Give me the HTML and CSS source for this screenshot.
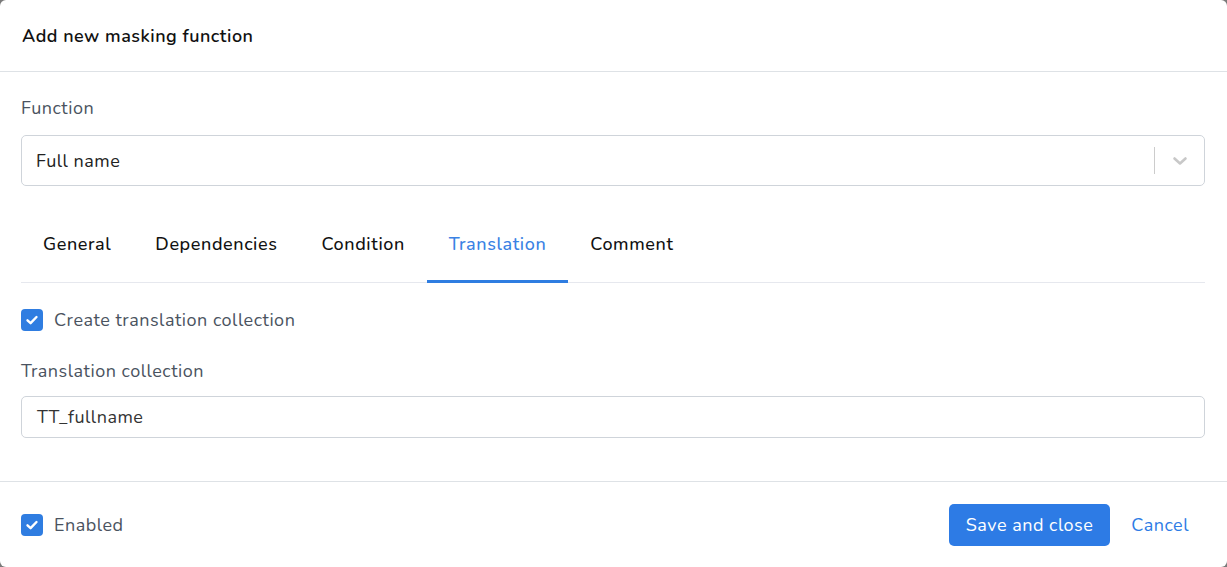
FILE: index.html
```html
<!DOCTYPE html>
<html lang="en">
<head>
<meta charset="utf-8">
<title>Add new masking function</title>
<link rel="stylesheet" href="styles.css">
</head>
<body>
<div class="modal">
  <div class="modal-header">
    <h1 class="modal-title">Add new masking function</h1>
  </div>
  <div class="modal-body">
    <label class="field-label">Function</label>
    <div class="select">
      <span class="select-value">Full name</span>
      <span class="select-indicators">
        <span class="select-sep"></span>
        <svg class="chevron" width="20" height="20" viewBox="0 0 20 20"><path d="M4.5 7.5 L10 12.5 L15.5 7.5" fill="none" stroke="#c8c8c8" stroke-width="2.6" stroke-linecap="round" stroke-linejoin="round"/></svg>
      </span>
    </div>
    <ul class="tabs">
      <li class="tab">General</li>
      <li class="tab">Dependencies</li>
      <li class="tab">Condition</li>
      <li class="tab active">Translation</li>
      <li class="tab">Comment</li>
    </ul>
    <label class="check-row first">
      <span class="checkbox"><svg width="22" height="22" viewBox="0 0 22 22"><path d="M6.5 11.3 L9.6 14.2 L15.5 8" fill="none" stroke="#fff" stroke-width="2.4" stroke-linecap="round" stroke-linejoin="round"/></svg></span>
      <span class="check-label">Create translation collection</span>
    </label>
    <label class="field-label second">Translation collection</label>
    <div class="input">TT_fullname</div>
  </div>
  <div class="modal-footer">
    <label class="check-row">
      <span class="checkbox"><svg width="22" height="22" viewBox="0 0 22 22"><path d="M6.5 11.3 L9.6 14.2 L15.5 8" fill="none" stroke="#fff" stroke-width="2.4" stroke-linecap="round" stroke-linejoin="round"/></svg></span>
      <span class="check-label">Enabled</span>
    </label>
    <div class="actions">
      <button class="btn btn-primary">Save and close</button>
      <button class="btn btn-link">Cancel</button>
    </div>
  </div>
</div>
</body>
</html>
```
FILE: styles.css
```css
* { box-sizing: border-box; }
html, body { margin: 0; padding: 0; }
body {
  background: #7a7a7a;
  font-family: "Nunito", "Lato", "Noto Sans", sans-serif;
  font-size: 18px;
  letter-spacing: 0.5px;
  color: #495057;
}
.modal {
  width: 1227px;
  height: 567px;
  background: #fff;
  border-radius: 6px;
  display: flex;
  flex-direction: column;
  overflow: hidden;
}
.modal-header {
  height: 72px;
  border-bottom: 1px solid #dee2e6;
  padding: 0 22px;
  display: flex;
  align-items: center;
}
.modal-title {
  margin: 0;
  font-size: 18px;
  font-weight: 600;
  color: #111;
  line-height: 24px;
}
.modal-body {
  padding: 24px 22px 0 21px;
  flex: 1;
  display: flex;
  flex-direction: column;
}
.field-label {
  display: block;
  line-height: 24px;
  color: #4a5360;
}
.field-label.second { margin-top: 27px; }
.select {
  margin-top: 15px;
  height: 51px;
  border: 1px solid #cfd4da;
  border-radius: 5px;
  display: flex;
  align-items: center;
  padding-left: 14px;
}
.select-value {
  flex: 1;
  color: #222;
}
.select-indicators {
  display: flex;
  align-items: center;
  height: 100%;
}
.select-sep {
  width: 1px;
  height: 27px;
  background: #cccccc;
  margin-right: 15px;
}
.chevron { margin-right: 14px; display: block; }
.tabs {
  list-style: none;
  margin: 20px 0 0;
  padding: 0;
  display: flex;
  border-bottom: 1px solid #e6e8ee;
}
.tab {
  padding: 26px 22px 24px;
  line-height: 24px;
  font-weight: 500;
  letter-spacing: 0.6px;
  color: #111;
  border-bottom: 3px solid transparent;
  margin-bottom: -1px;
}
.tab.active {
  color: #3a82e4;
  border-bottom-color: #2f7de1;
}
.check-row {
  display: flex;
  align-items: center;
  gap: 11px;
  line-height: 24px;
}
.check-row.first { margin-top: 25px; }
.checkbox {
  width: 22px;
  height: 22px;
  border-radius: 4px;
  background: #2f7de1;
  display: flex;
}
.check-label {
  color: #4a5360;
}
.input {
  margin-top: 13px;
  height: 42px;
  border: 1px solid #cfd4da;
  border-radius: 5px;
  display: flex;
  align-items: center;
  padding-left: 15px;
  color: #333;
}
.modal-footer {
  height: 86px;
  border-top: 1px solid #dee2e6;
  display: flex;
  align-items: center;
  justify-content: space-between;
  padding: 0 17px 0 21px;
}
.actions { display: flex; align-items: center; }
.btn {
  font-family: inherit;
  font-size: 18px;
  letter-spacing: 0.5px;
  border: none;
  background: none;
  cursor: pointer;
}
.btn-primary {
  background: #2d7be5;
  color: #fff;
  height: 42px;
  padding: 0 17px;
  border-radius: 5px;
}
.btn-link {
  color: #2d7be5;
  padding: 0 21px;
  height: 42px;
}
```
